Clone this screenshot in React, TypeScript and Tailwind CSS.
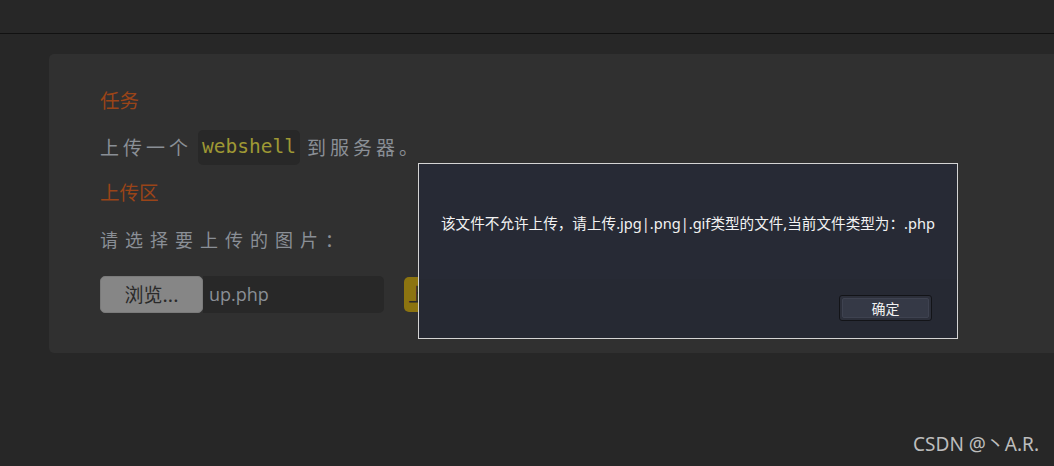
import React from "react";

export default function App() {
  const cjk = { fontFamily: '"Noto Sans CJK SC", "Noto Sans", sans-serif' };
  return (
    <div className="relative w-[1054px] h-[466px] overflow-hidden bg-[#272727]" style={cjk}>
      <div className="h-[34px] bg-[#272727] border-b border-[#111111]" />
      <div className="pt-[20px] pl-[49px]">
        <div className="h-[299px] rounded-l-[5px] bg-[#303030] pl-[51px] pt-[34px]">
          <div className="text-[19.5px] leading-[24px] text-[#9a4418]">任务</div>
          <div className="mt-[17px] flex items-center h-[36px] text-[19px] text-[#8a8f96] tracking-[4px]">
            <span>上传一个</span>
            <span className="ml-[6px] mr-[7px] h-[35px] flex items-center rounded-[5px] bg-[#282828] px-[4px] text-[#9f9834] tracking-[0px] text-[19.5px]" style={{ fontFamily: '"DejaVu Sans Mono", monospace' }}>webshell</span>
            <span>到服务器。</span>
          </div>
          <div className="mt-[15px] text-[19.5px] leading-[24px] text-[#9a4418]">上传区</div>
          <div className="mt-[23px] text-[18px] leading-[24px] text-[#8a8f96] tracking-[7px]">请选择要上传的图片：</div>
          <div className="mt-[25px] flex items-center">
            <div className="w-[103px] h-[37px] rounded-[5px] bg-[#868686] border border-[#7a7a7a] flex items-center justify-center text-[19px] text-[#2a2a2a]">浏览...</div>
            <div className="w-[181px] h-[37px] rounded-r-[5px] bg-[#282828] flex items-center pl-[6px] text-[18px] text-[#8a8f96]" style={{ fontFamily: '"Open Sans", "Noto Sans", sans-serif' }}>up.php</div>
            <div className="ml-[20px] w-[60px] h-[35px] rounded-[5px] bg-[#8c7410] flex items-center pl-[4px] text-[19px] text-[#2a2a2a]">上传</div>
          </div>
        </div>
      </div>

      <div className="absolute left-[418px] top-[163px] w-[540px] h-[176px] border border-[#d4d4d4] bg-[#272a35] flex flex-col">
        <div className="h-[115px] flex items-start pt-[49px] pl-[22px] text-[14.6px] text-[#f2f2f2] whitespace-nowrap" style={{ fontFamily: '"Noto Sans", "Noto Sans CJK SC", sans-serif' }}>
          该文件不允许上传，请上传.jpg|.png|.gif类型的文件,当前文件类型为：.php
        </div>
        <div className="flex-1 bg-[#262933] flex justify-end items-start pt-[16px] pr-[25px]">
          <div className="w-[93px] h-[26px] rounded-[3px] border border-[#131418] bg-[#2c2f3a] p-[2px]">
            <div className="w-full h-full rounded-[2px] border border-[#3e4250] bg-[#353946] flex items-center justify-center text-[14px] text-[#f0f0f0]">确定</div>
          </div>
        </div>
      </div>

      <div className="absolute right-[15px] bottom-[8px] text-[19px] text-[#bdbdbd]" style={{ fontFamily: '"Noto Sans", "Noto Sans CJK SC", sans-serif' }}>CSDN @丶A.R.</div>
    </div>
  );
}
